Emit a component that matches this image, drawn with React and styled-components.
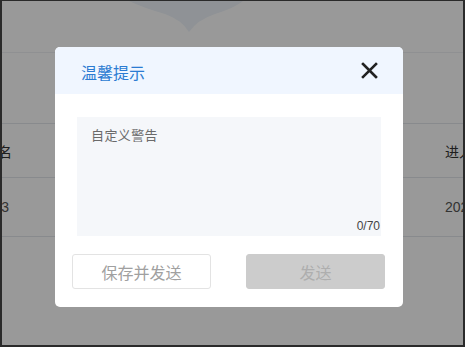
import React from "react";
import styled, { createGlobalStyle } from "styled-components";

const Global = createGlobalStyle`
  html, body { margin: 0; padding: 0; }
  body { font-family: "Liberation Sans", "Noto Sans CJK SC", sans-serif; background: #fff; }
  * { box-sizing: border-box; }
`;

const Frame = styled.div`
  position: relative;
  width: 465px;
  height: 347px;
  overflow: hidden;
  border-style: solid;
  border-color: #2a2a2a;
  border-width: 1px 2px 2px 2px;
  background: #fff;
`;

const TopBar = styled.div`
  height: 52px;
  border-bottom: 1px solid #eef0f3;
  display: flex;
  justify-content: flex-start;
`;

const Badge = styled.svg`
  display: block;
  margin-left: 125px;
  margin-top: -1px;
`;

const Table = styled.div`
  margin-top: 70px;
  border-top: 1px solid #e3e6eb;
`;

const Row = styled.div`
  display: flex;
  align-items: center;
  justify-content: space-between;
  height: ${(p) => p.h}px;
  border-bottom: 1px solid #e3e6eb;
  font-family: "Liberation Sans", "Noto Sans CJK SC", sans-serif;
  font-size: 14px;
  color: ${(p) => (p.head ? "#333" : "#555")};
  font-weight: 400;
`;

const FirstCell = styled.div`
  width: 60px;
  margin-left: ${(p) => p.shift}px;
  text-align: right;
  white-space: nowrap;
`;

const LastCell = styled.div`
  width: 80px;
  margin-right: -62px;
  white-space: nowrap;
`;

const Overlay = styled.div`
  position: absolute;
  inset: 0;
  background: rgba(0, 0, 0, 0.4);
`;

const Dialog = styled.div`
  position: absolute;
  left: 53px;
  top: 46px;
  width: 348px;
  background: #fff;
  border-radius: 5px;
  overflow: hidden;
  display: flex;
  flex-direction: column;
`;

const Header = styled.div`
  height: 47px;
  background: #f0f6ff;
  display: flex;
  align-items: center;
  justify-content: space-between;
  padding: 0 25px 0 26px;
`;

const Title = styled.div`
  font-family: "Noto Sans CJK SC", sans-serif;
  font-size: 16px;
  color: #2b7bd2;
  line-height: 20px;
  margin-top: 2px;
`;

const Close = styled.svg`
  display: block;
`;

const Body = styled.div`
  padding: 23px 22px 0 22px;
`;

const Area = styled.div`
  position: relative;
  height: 119px;
  background: #f5f7fa;
  padding: 9px 14px;
`;

const Placeholder = styled.div`
  font-family: "Noto Sans CJK SC", sans-serif;
  font-size: 13px;
  letter-spacing: 0.4px;
  line-height: 18px;
  color: #6a6a6a;
`;

const Counter = styled.div`
  position: absolute;
  right: 1px;
  bottom: 3px;
  font-family: "Liberation Sans", sans-serif;
  font-size: 12px;
  color: #444;
`;

const Footer = styled.div`
  display: flex;
  justify-content: space-between;
  padding: 18px 18px 18px 17px;
`;

const Button = styled.button`
  width: 139px;
  height: 35px;
  border-radius: 3px;
  font-family: "Noto Sans CJK SC", sans-serif;
  font-size: 16px;
  border: 1px solid ${(p) => (p.primary ? "#cccccc" : "#e3e3e3")};
  background: ${(p) => (p.primary ? "#cccccc" : "#fff")};
  color: ${(p) => (p.primary ? "#aeaeae" : "#a0a0a0")};
  padding: 0;
  cursor: pointer;
`;

export default function App() {
  return (
    <>
      <Global />
      <Frame>
        <TopBar>
          <Badge width="120" height="34" viewBox="0 0 120 34">
            <path
              d="M0 0 H117 Q110 7 88 14 Q70 20 62 32 Q55 20 38 14 Q14 7 0 0 Z"
              fill="#eef4fa"
            />
          </Badge>
        </TopBar>
        <Table>
          <Row h={54} head>
            <FirstCell shift={-50}>姓名</FirstCell>
            <LastCell>进入时间</LastCell>
          </Row>
          <Row h={59}>
            <FirstCell shift={-53}>123</FirstCell>
            <LastCell>2023-05</LastCell>
          </Row>
        </Table>
        <Overlay />
        <Dialog>
          <Header>
            <Title>温馨提示</Title>
            <Close width="17" height="17" viewBox="0 0 17 17">
              <path
                d="M2 2 L15 15 M15 2 L2 15"
                stroke="#222"
                strokeWidth="2.6"
                strokeLinecap="square"
              />
            </Close>
          </Header>
          <Body>
            <Area>
              <Placeholder>自定义警告</Placeholder>
              <Counter>0/70</Counter>
            </Area>
          </Body>
          <Footer>
            <Button>保存并发送</Button>
            <Button primary>发送</Button>
          </Footer>
        </Dialog>
      </Frame>
    </>
  );
}
